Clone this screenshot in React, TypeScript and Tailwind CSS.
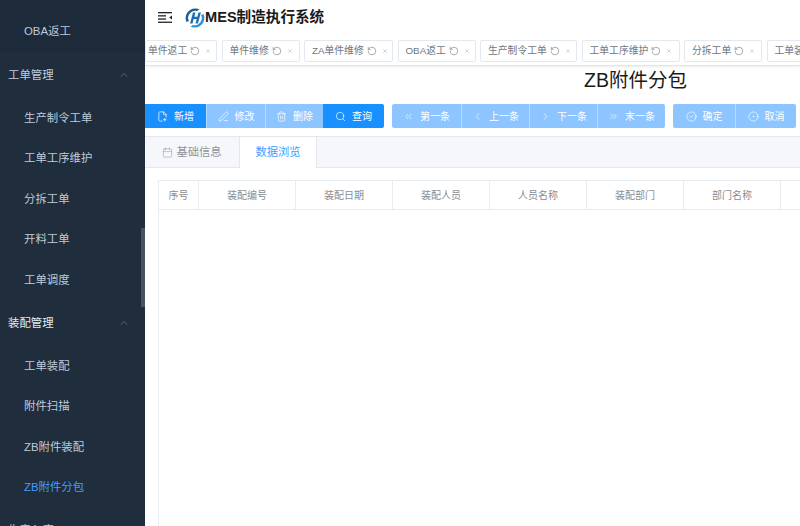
import { Calendar, ChevronLeft, ChevronRight, ChevronUp, ChevronsLeft, ChevronsRight, CircleCheck, CircleDot, FilePlus2, PenLine, RotateCcw, Search, Trash2, X } from "lucide-react";
import type { ComponentType } from "react";

type Icon = ComponentType<{ size?: number; strokeWidth?: number; className?: string }>;

const font = "font-['Liberation_Sans','Noto_Sans_CJK_SC',sans-serif]";

function Item({ label, active }: { label: string; active?: boolean }) {
  return (
    <div className={`flex h-[40.5px] items-center pl-[24px] text-[11.4px] ${active ? "text-[#409eff]" : "text-[#bfcbd9]"}`}>
      {label}
    </div>
  );
}

function Group({ label, bright }: { label: string; bright?: boolean }) {
  return (
    <div className={`flex h-[45.5px] items-center justify-between pl-[8px] pr-[15px] text-[11.4px] ${bright ? "text-[#e6ebf1]" : "text-[#bfcbd9]"}`}>
      <span>{label}</span>
      <ChevronUp size={12} strokeWidth={1.2} className="text-[#7f8b99]" />
    </div>
  );
}

function Sidebar() {
  return (
    <aside className="relative h-full w-[145px] shrink-0 overflow-hidden bg-[#1f2d3d]">
      <div className="h-[12px] bg-[#1c2a39]" />
      <div className="flex h-[40px] items-center bg-[#1c2a39] pl-[24px] text-[11.4px] text-[#bfcbd9]">OBA返工</div>
      <div className="h-[0.5px]" />
      <Group label="工单管理" />
      <Item label="生产制令工单" />
      <Item label="工单工序维护" />
      <Item label="分拆工单" />
      <Item label="开料工单" />
      <Item label="工单调度" />
      <Group label="装配管理" bright />
      <Item label="工单装配" />
      <Item label="附件扫描" />
      <Item label="ZB附件装配" />
      <Item label="ZB附件分包" active />
      <Group label="生产入库" />
      <div className="absolute right-0 top-[228px] h-[79px] w-[4px] bg-[#465362]" />
    </aside>
  );
}

function Logo() {
  return (
    <svg width="20" height="20" viewBox="0 0 20 20" className="shrink-0">
      <path d="M10 0.500a9.500 9.500 0 0 0-8.500 13.500l2.500-1a7 7 0 0 1 8-10l2.500-1.700a9.500 9.500 0 0 0-4.500-0.800z" fill="#1c5f96" />
      <path d="M10 19.500a9.500 9.500 0 0 0 8.500-13.500l-2.500 1a7 7 0 0 1-8 10l-2.500 1.700a9.500 9.500 0 0 0 4.500 0.800z" fill="#2a93d8" />
      <path d="M5 15.500 8 4.500h2.400L9.400 8.800h3l1.100-4.300h2.400l-3 11h-2.400l1.200-4.500h-3l-1.200 4.500z" fill="#1f6fb0" />
    </svg>
  );
}

const tags = [
  { label: "单件返工", w: "w-[72px]", pl: "pl-[2px]" },
  { label: "单件维修", w: "w-[78px]", pl: "pl-[7px]" },
  { label: "ZA单件维修", w: "w-[89px]", pl: "pl-[7px]" },
  { label: "OBA返工", w: "w-[78px]", pl: "pl-[7px]" },
  { label: "生产制令工单", w: "w-[97px]", pl: "pl-[7px]" },
  { label: "工单工序维护", w: "w-[98px]", pl: "pl-[7px]" },
  { label: "分拆工单", w: "w-[78px]", pl: "pl-[7px]" },
  { label: "工单装配", w: "w-[78px]", pl: "pl-[7px]" },
];

function Tag({ label, w, pl }: { label: string; w: string; pl: string }) {
  return (
    <div className={`flex h-[22px] shrink-0 items-center rounded-[2px] border border-[#e4e9f0] bg-white ${w} ${pl} text-[9.8px] text-[#6f7683]`}>
      <span className="whitespace-nowrap">{label}</span>
      <RotateCcw size={10} strokeWidth={1.2} className="ml-[3px] shrink-0 text-[#555c68]" />
      <X size={6} strokeWidth={1.5} className="ml-[5px] shrink-0 text-[#8b929c]" />
    </div>
  );
}

function Btn({ icon: I, label, w, on, mid }: { icon: Icon; label: string; w: string; on?: boolean; mid?: boolean }) {
  return (
    <div
      className={`flex h-[24px] items-center justify-center gap-[6px] text-[10px] text-white ${w} ${on ? "bg-[#1890ff]" : "bg-[#8cc5ff]"} ${mid ? "border-l border-[#b5dbff]" : ""}`}
    >
      <I size={11} strokeWidth={1.5} />
      <span>{label}</span>
    </div>
  );
}

const cols = ["装配编号", "装配日期", "装配人员", "人员名称", "装配部门", "部门名称"];

export default function App() {
  return (
    <div className={`flex h-[526px] w-[800px] overflow-hidden bg-white ${font}`}>
      <Sidebar />
      <main className="flex min-w-0 flex-1 flex-col overflow-hidden">
        <header className="flex h-[35px] shrink-0 items-center pl-[13px]">
          <svg width="14" height="11" viewBox="0 0 14 11" className="mr-[13px] shrink-0" fill="#222">
            <rect x="0" y="0" width="14" height="1.3" />
            <rect x="0" y="3.2" width="8" height="1.3" />
            <rect x="0" y="6.4" width="8" height="1.3" />
            <rect x="0" y="9.6" width="14" height="1.3" />
            <path d="M14 3.400v4l-2.800-2z" />
          </svg>
          <Logo />
          <span className="text-[14.6px] font-bold text-[#1a1a1a]">MES制造执行系统</span>
        </header>
        <div className="flex h-[31px] shrink-0 gap-[4.5px] border-b border-[#e6e6e6] pt-[5px] shadow-[0_1px_2px_rgba(0,0,0,0.08)]">
          {tags.map((t) => (
            <Tag key={t.label} {...t} />
          ))}
        </div>
        <h1 className="mt-[1px] h-[26px] shrink-0 pl-[439px] text-[19.5px] font-normal leading-[26px] text-[#1a1a1a] whitespace-nowrap">
          ZB附件分包
        </h1>
        <div className="mt-[11px] flex h-[24px] shrink-0">
          <div className="flex overflow-hidden rounded-r-[2px]">
            <Btn icon={FilePlus2} label="新增" w="w-[61px]" on />
            <Btn icon={PenLine} label="修改" w="w-[59px]" mid />
            <Btn icon={Trash2} label="删除" w="w-[58px]" mid />
            <Btn icon={Search} label="查询" w="w-[61px]" on />
          </div>
          <div className="ml-[8px] flex overflow-hidden rounded-[2px]">
            <Btn icon={ChevronsLeft} label="第一条" w="w-[69px]" />
            <Btn icon={ChevronLeft} label="上一条" w="w-[68px]" mid />
            <Btn icon={ChevronRight} label="下一条" w="w-[68px]" mid />
            <Btn icon={ChevronsRight} label="末一条" w="w-[68px]" mid />
          </div>
          <div className="ml-[8px] flex overflow-hidden rounded-[2px]">
            <Btn icon={CircleCheck} label="确定" w="w-[62px]" />
            <Btn icon={CircleDot} label="取消" w="w-[61px]" mid />
          </div>
        </div>
        <div className="mt-[8px] flex h-[32px] shrink-0 border-y border-[#e4e7ed] bg-[#f5f7fa] text-[11.3px]">
          <div className="flex w-[94px] items-center justify-center gap-[3px] text-[#909399]">
            <Calendar size={11} strokeWidth={1.1} />
            <span>基础信息</span>
          </div>
          <div className="mb-[-1px] flex w-[78px] items-center justify-center border-x border-[#e4e7ed] bg-white text-[#409eff]">
            数据浏览
          </div>
        </div>
        <div className="ml-[13px] mt-[12px] flex-1 border-l border-[#e8ebf0]">
          <div className="flex h-[30px] border-y border-[#e8ebf0] text-[10px] text-[#8a8d93]">
            <div className="flex w-[40px] shrink-0 items-center justify-center border-r border-[#e8ebf0]">序号</div>
            {cols.map((c) => (
              <div key={c} className="flex w-[97px] shrink-0 items-center justify-center border-r border-[#e8ebf0]">
                {c}
              </div>
            ))}
          </div>
        </div>
      </main>
    </div>
  );
}
